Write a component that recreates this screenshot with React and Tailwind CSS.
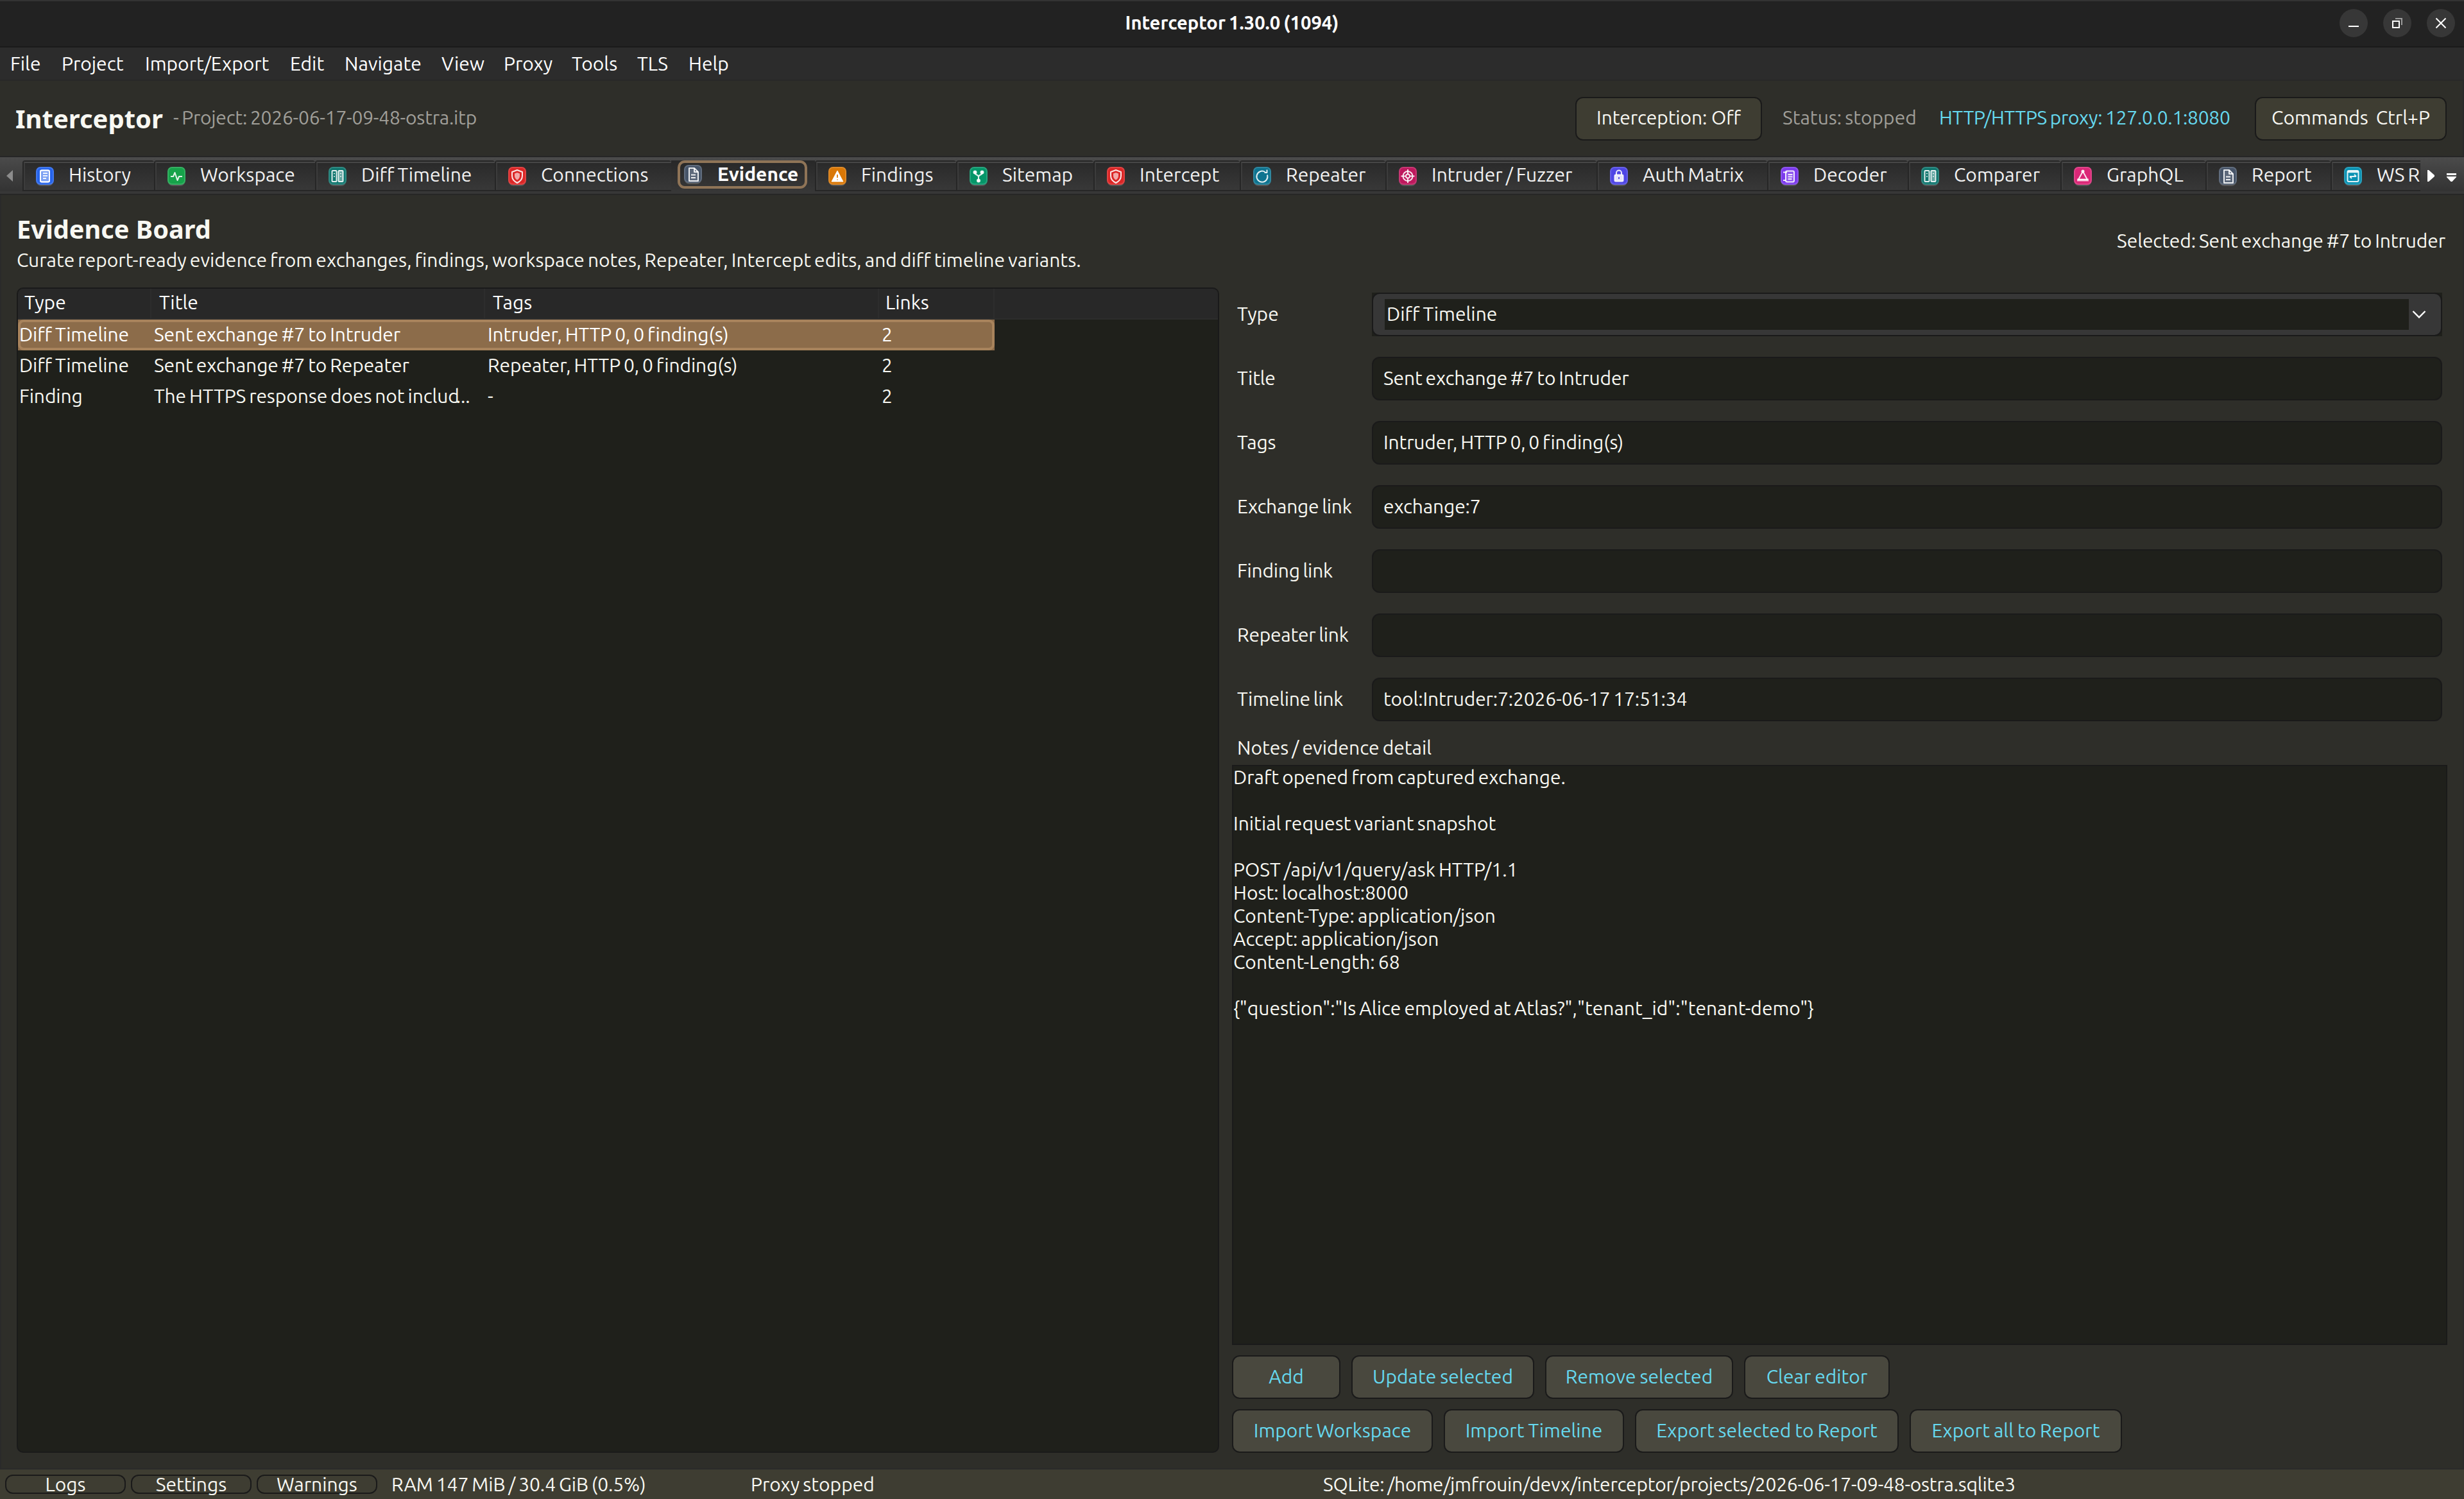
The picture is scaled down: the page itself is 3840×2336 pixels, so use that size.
import React from "react";
import clsx from "clsx";

const MENUS = [
  { label: "File", width: "w-[80px]" },
  { label: "Project", width: "w-[130px]" },
  { label: "Import/Export", width: "w-[226px]" },
  { label: "Edit", width: "w-[85px]" },
  { label: "Navigate", width: "w-[151px]" },
  { label: "View", width: "w-[97px]" },
  { label: "Proxy", width: "w-[106px]" },
  { label: "Tools", width: "w-[102px]" },
  { label: "TLS", width: "w-[80px]" },
  { label: "Help", width: "w-[80px]" },
];

const TABS = [
  { label: "History", icon: "list", color: "#2563eb", width: "w-[205px]" },
  { label: "Workspace", icon: "pulse", color: "#16a34a", width: "w-[251px]" },
  { label: "Diff Timeline", icon: "columns", color: "#0f766e", width: "w-[280px]" },
  { label: "Connections", icon: "shield", color: "#dc2626", width: "w-[275px]" },
  { label: "Evidence", icon: "file", color: "#475569", width: "w-[224px]", active: true },
  { label: "Findings", icon: "warning", color: "#d97706", width: "w-[220px]" },
  { label: "Sitemap", icon: "branch", color: "#059669", width: "w-[214px]" },
  { label: "Intercept", icon: "shield", color: "#dc2626", width: "w-[228px]" },
  { label: "Repeater", icon: "repeat", color: "#0e7490", width: "w-[227px]" },
  { label: "Intruder / Fuzzer", icon: "target", color: "#be185d", width: "w-[329px]" },
  { label: "Auth Matrix", icon: "lock", color: "#4f46e5", width: "w-[266px]" },
  { label: "Decoder", icon: "decode", color: "#7c3aed", width: "w-[219px]" },
  { label: "Comparer", icon: "columns", color: "#0f766e", width: "w-[238px]" },
  { label: "GraphQL", icon: "graph", color: "#db2777", width: "w-[226px]" },
  { label: "Report", icon: "file", color: "#475569", width: "w-[195px]" },
  { label: "WS R", icon: "socket", color: "#0891b2", width: "w-[160px]" },
];

const EVIDENCE = [
  {
    type: "Diff Timeline",
    title: "Sent exchange #7 to Intruder",
    tags: "Intruder, HTTP 0, 0 finding(s)",
    links: 2,
    selected: true,
  },
  {
    type: "Diff Timeline",
    title: "Sent exchange #7 to Repeater",
    tags: "Repeater, HTTP 0, 0 finding(s)",
    links: 2,
  },
  {
    type: "Finding",
    title: "The HTTPS response does not includ",
    clipped: true,
    tags: "-",
    links: 2,
  },
];

const FIELDS = [
  { label: "Title", value: "Sent exchange #7 to Intruder" },
  { label: "Tags", value: "Intruder, HTTP 0, 0 finding(s)" },
  { label: "Exchange link", value: "exchange:7" },
  { label: "Finding link", value: "" },
  { label: "Repeater link", value: "" },
  { label: "Timeline link", value: "tool:Intruder:7:2026-06-17 17:51:34" },
];

const NOTES = `Draft opened from captured exchange.

Initial request variant snapshot

POST /api/v1/query/ask HTTP/1.1
Host: localhost:8000
Content-Type: application/json
Accept: application/json
Content-Length: 68

{"question":"Is Alice employed at Atlas?","tenant_id":"tenant-demo"}`;

const glyphs = {
  list: (
    <>
      <rect x="7" y="5.5" width="14" height="18" rx="2" fill="#fff" fillOpacity=".4" />
      <path d="M11 10h7M11 14h7M11 18h5" />
      <rect x="7" y="5.5" width="14" height="18" rx="2" />
    </>
  ),
  pulse: <path d="M5 15h4l2.5-6 4 12 2.500-6h5" />,
  columns: (
    <>
      <rect x="5.500" y="6" width="7" height="17" rx="1" />
      <rect x="15.500" y="6" width="7" height="17" rx="1" fill="#fff" fillOpacity=".35" />
      <path d="M8 10.500h2M8 15h2M18 10.500h2M18 15h2" strokeWidth="1.600" />
    </>
  ),
  shield: (
    <>
      <path d="M14 5l8 3v6c0 5-3 8.500-8 11-5-2.500-8-6-8-11V8z" />
      <path d="M14 9l4 1.500V14c0 3-1.500 5-4 6.500-2.500-1.500-4-3.500-4-6.500v-3.500z" fill="#fff" fillOpacity=".6" stroke="none" />
    </>
  ),
  file: (
    <>
      <path d="M8 5h8l6 6v14H8z" fill="#fff" fillOpacity=".12" />
      <path d="M16 5v6h6M11 15.500h7M11 20h7" />
    </>
  ),
  warning: (
    <>
      <path d="M14 6l9 17H5z" fill="#fff" stroke="#fff" strokeWidth="1" />
      <path d="M14 12v5M14 19.500v1" stroke="#d97706" strokeWidth="2" />
    </>
  ),
  branch: (
    <>
      <path d="M8.500 9.500c0 4 5.500 2 5.500 6.500v4M19.500 9.500c0 4-5.500 2-5.500 6.500" />
      <circle cx="8.500" cy="8.500" r="2" fill="#fff" />
      <circle cx="19.500" cy="8.500" r="2" fill="#fff" />
      <circle cx="14" cy="21.500" r="2" fill="#fff" />
    </>
  ),
  repeat: <path d="M18.500 8A8.500 8.500 0 1 0 22 12.500M17.500 9h4V4.500" />,
  target: (
    <>
      <circle cx="14" cy="14.500" r="7.500" />
      <circle cx="14" cy="14.500" r="3" />
      <path d="M14 4v7M14 18v7M3.500 14.500h7M17.500 14.500h7" />
    </>
  ),
  lock: (
    <>
      <path d="M10 13V9.500a4 4 0 0 1 8 0V13" />
      <rect x="7.500" y="12.500" width="13" height="10" rx="1.500" fill="#fff" fillOpacity=".85" />
      <path d="M14 16v3" stroke="#4f46e5" />
    </>
  ),
  decode: (
    <>
      <rect x="8" y="6.500" width="13" height="17" rx="2" fill="#fff" fillOpacity=".15" />
      <path d="M4 8.500h6M11.500 12h7M11.500 15.500h7M11.500 19h6M4 21h4" />
    </>
  ),
  graph: (
    <>
      <path d="M14 7l7 13H7z" />
      <circle cx="14" cy="7" r="1.500" fill="#fff" />
      <path d="M5 20.500h18" strokeWidth="4" strokeOpacity=".7" />
    </>
  ),
  socket: (
    <>
      <rect x="5.500" y="6" width="17" height="17" rx="2" />
      <path d="M9 15h10M16 12l3 3M9 15l3 3" />
      <path d="M5.500 8h17" strokeWidth="2.500" />
    </>
  ),
};

function TabIcon({ name, color }) {
  return (
    <svg className="h-[30px] w-[29px] flex-shrink-0" viewBox="0 0 29 30" fill="none">
      <rect x="1" y="2" width="26" height="28" rx="7" fill="#555" />
      <rect x="0" y="0" width="28" height="28" rx="7" fill={color} />
      <rect x="1" y="1" width="26" height="26" rx="6" stroke="#fff" strokeOpacity=".14" strokeWidth="2" />
      <g stroke="#fff" strokeOpacity=".88" strokeWidth="2" strokeLinejoin="round">
        {glyphs[name]}
      </g>
    </svg>
  );
}

function WindowButton({ children }) {
  return (
    <div className="flex size-[44px] items-center justify-center rounded-full bg-[#373737]">
      <svg className="size-[20px]" viewBox="0 0 20 20" fill="none" stroke="#fff" strokeWidth="2">
        {children}
      </svg>
    </div>
  );
}

function TitleBar() {
  return (
    <div className="flex h-[74px] items-center border-t-2 border-b-2 border-t-[#333333] border-b-[#1a1a1a] bg-[#222222] pr-[14px] pb-[2px]">
      <div className="w-[194px]" />
      <p className="flex-grow pb-px text-center text-[29.200px] font-bold text-white">Interceptor 1.30.0 (1094)</p>
      <div className="flex gap-[24px]">
        <WindowButton>
          <path d="M2 15h16" />
        </WindowButton>
        <WindowButton>
          <rect x="3" y="7" width="10" height="10" />
          <path d="M7 3h10v10" strokeOpacity=".5" />
        </WindowButton>
        <WindowButton>
          <path d="M2.500 2.500l15 15M17.500 2.500l-15 15" />
        </WindowButton>
      </div>
    </div>
  );
}

function MenuBar() {
  return (
    <div className="flex h-[52px] items-center border-b-2 border-[#282828] bg-[#2c2c2c] pl-[16px] text-white">
      {MENUS.map((menu) => (
        <span key={menu.label} className={menu.width}>
          {menu.label}
        </span>
      ))}
    </div>
  );
}

function ProjectHeader() {
  return (
    <div className="flex h-[117px] items-center border-r-2 border-[#282828] pr-[25px] pl-[24px]">
      <h1 className="w-[246px] font-['Noto_Sans',sans-serif] text-[40px] font-bold">Interceptor</h1>
      <p className="flex-grow pb-[3px] tracking-[-0.250px] text-[#a09f99]">- Project: 2026-06-17-09-48-ostra.itp</p>
      <button className="h-[68px] w-[291px] rounded-[12px] border-2 border-[#1a1a1a] bg-[#3e3d32] pb-[3px] tracking-[-0.100px]">
        Interception: Off
      </button>
      <p className="ml-[32px] w-[244px] pb-[3px] text-[#a09f99]">Status: stopped</p>
      <p className="w-[492px] pb-[3px] tracking-[-0.300px] text-[#66d9ef]">HTTP/HTTPS proxy: 127.0.0.1:8080</p>
      <button className="h-[68px] w-[299px] rounded-[12px] border-2 border-[#1a1a1a] bg-[#3e3d32] pb-[3px] whitespace-pre [word-spacing:-1px]">
        Commands  Ctrl+P
      </button>
    </div>
  );
}

function Tab({ tab }) {
  if (tab.active) {
    return (
      <div
        className={clsx(
          "flex h-[48px] flex-shrink-0 items-start bg-linear-to-b from-[#282828] to-[#373737] pl-[10px]",
          tab.width
        )}
      >
        <div className="flex h-[44px] w-[202px] items-center rounded-[11px] border-4 border-[#8f7457] pl-[6px]">
          <TabIcon name={tab.icon} color={tab.color} />
          <span className="mt-[-3px] ml-[23px] font-bold text-white">{tab.label}</span>
        </div>
      </div>
    );
  }
  return (
    <div
      className={clsx(
        "flex h-[48px] flex-shrink-0 rounded-t-[4px] border-2 border-r-0 border-[#262626]",
        tab.width
      )}
    >
      <div className="flex w-full items-center border-t-2 border-l-2 border-t-[#474747] border-l-[#3c3c3c] bg-linear-to-b from-[#2a2a2a] to-[#383838] pl-[17px]">
        <TabIcon name={tab.icon} color={tab.color} />
        <span className="mt-[-6px] ml-[22px] whitespace-nowrap text-[#f2f2f2]">{tab.label}</span>
      </div>
    </div>
  );
}

function TabStrip() {
  return (
    <div className="h-[61px] border-t-2 border-b-2 border-[#262626]">
      <div className="flex h-[53px] bg-linear-to-b from-[#4b4b4b] to-[#333333]">
        <div className="flex w-[35px] flex-shrink-0 items-center pt-[4px] pl-[10px]">
          <svg className="h-[18px] w-[10px]" viewBox="0 0 10 18">
            <path d="M10 0v18L0 9z" fill="#8c8c8c" />
          </svg>
        </div>
        <div className="flex w-[3737px] flex-shrink-0 items-end overflow-hidden">
          {TABS.map((tab) => (
            <Tab key={tab.label} tab={tab} />
          ))}
        </div>
        <div className="flex flex-grow items-center gap-[19px] pt-[4px] pl-[11px]">
          <svg className="h-[18px] w-[11px]" viewBox="0 0 11 18">
            <path d="M0 0h2l9 8v2l-9 8H0z" fill="#fff" />
          </svg>
          <svg className="mt-[6px] h-[14px] w-[15px]" viewBox="0 0 15 14">
            <path d="M0 0h15v3H0zM0 5h15v1L8.500 13h-2L0 6z" fill="#fff" />
          </svg>
        </div>
      </div>
      <div className="h-[4px] bg-[#373737]" />
    </div>
  );
}

function EvidenceTable() {
  return (
    <div className="flex h-[1816px] w-[1874px] flex-col overflow-hidden rounded-[10px] border-2 border-[#1a1a1a] bg-[#1f201b]">
      <div className="flex h-[48px] border-b-2 border-[#2d2d2d] bg-[#282828] pb-[4px] leading-[43px] text-white">
        <span className="h-[46px] w-[208px] border-r-2 border-[#2d2d2d] pl-[10px]">Type</span>
        <span className="h-[46px] w-[520px] border-r-2 border-[#2d2d2d] pl-[12px]">Title</span>
        <span className="h-[46px] w-[614px] border-r-2 border-[#2d2d2d] pl-[12px]">Tags</span>
        <span className="h-[46px] w-[180px] border-r-2 border-[#2d2d2d] pl-[10px]">Links</span>
      </div>
      {EVIDENCE.map((row) => (
        <div
          key={row.title}
          className={clsx("h-[48px] w-[1522px]", row.selected && "bg-[#8c6c4a] text-white")}
        >
          <div
            className={clsx(
              "flex h-full border-4 leading-[38px] tracking-[-0.100px]",
              row.selected ? "rounded-[9px] border-[#a8835c]" : "border-transparent"
            )}
          >
            <span className="-ml-[2px] w-[210px]">{row.type}</span>
            <span className="w-[520px] whitespace-nowrap">
              {row.title}
              {row.clipped && <span className="-ml-[5px]">...</span>}
            </span>
            <span className="w-[614px]">{row.tags}</span>
            <span>{row.links}</span>
          </div>
        </div>
      ))}
    </div>
  );
}

function TypeSelect() {
  return (
    <div className="h-[68px] w-[1668px] bg-[#1f201b]">
      <div className="flex h-full items-center rounded-[12px] border-2 border-[#1a1a1a] bg-[#373737] pl-[18px]">
        <div className="flex h-[48px] w-[1596px] items-center bg-[#1f201b] pb-[2px] pl-[3px]">Diff Timeline</div>
        <svg className="ml-[5px] h-[14px] w-[22px]" viewBox="0 0 22 14" fill="none">
          <path d="M1.500 2L11 11.500 20.500 2" stroke="#fff" strokeWidth="2.400" />
        </svg>
      </div>
    </div>
  );
}

function EvidenceEditor() {
  return (
    <div className="flex flex-col">
      <div className="flex flex-col gap-[32px] pt-[8px] pl-[8px]">
        <div className="flex items-center">
          <label className="w-[210px] pb-[2px]">Type</label>
          <TypeSelect />
        </div>
        {FIELDS.map((field) => (
          <div key={field.label} className="flex items-center">
            <label className="w-[210px] pb-[2px] tracking-[-0.250px]">{field.label}</label>
            <div className="flex h-[68px] w-[1668px] items-center rounded-[12px] border-2 border-[#1a1a1a] bg-[#1f201b] pb-[2px] pl-[16px] tracking-[-0.150px]">
              {field.value}
            </div>
          </div>
        ))}
      </div>
      <p className="h-[68px] pt-[23px] pl-[8px]">Notes / evidence detail</p>
      <pre className="h-[904px] w-[1894px] border-2 border-[#1a1a1a] bg-[#1f201b] font-[Ubuntu,'Noto_Sans',sans-serif] leading-[36px]">
        <code className="-mt-px block font-[Ubuntu,'Noto_Sans',sans-serif]">{NOTES}</code>
      </pre>
      <div className="mt-[16px] flex gap-[17px]">
        <ActionButton label="Add" width="w-[169px]" />
        <ActionButton label="Update selected" width="w-[285px]" />
        <ActionButton label="Remove selected" width="w-[293px]" />
        <ActionButton label="Clear editor" width="w-[227px]" />
      </div>
      <div className="mt-[16px] flex gap-[17px]">
        <ActionButton label="Import Workspace" width="w-[313px]" />
        <ActionButton label="Import Timeline" width="w-[281px]" />
        <ActionButton label="Export selected to Report" width="w-[411px]" />
        <ActionButton label="Export all to Report" width="w-[331px]" />
      </div>
    </div>
  );
}

function ActionButton({ label, width }) {
  return (
    <button
      className={clsx(
        "h-[68px] rounded-[12px] border-2 border-[#1a1a1a] bg-[#49483e] pb-[2px] whitespace-nowrap text-[#66d9ef] [word-spacing:-1px]",
        width
      )}
    >
      {label}
    </button>
  );
}

function StatusBar() {
  return (
    <div className="flex h-[48px] items-center border-t-2 border-[#2a2a2a] bg-[#3e3d32] pl-[8px]">
      <div className="flex gap-[8px]">
        {["Logs", "Settings", "Warnings"].map((label) => (
          <button
            key={label}
            className="h-[30px] w-[188px] rounded-[12px] border-2 border-[#1a1a1a] leading-[22px]"
          >
            {label}
          </button>
        ))}
      </div>
      <span className="ml-[22px] w-[560px] tracking-[-0.100px]">RAM 147 MiB / 30.4 GiB (0.5%)</span>
      <span className="w-[892px]">Proxy stopped</span>
      <span className="tracking-[-0.260px]">
        SQLite: /home/jmfrouin/devx/interceptor/projects/2026-06-17-09-48-ostra.sqlite3
      </span>
    </div>
  );
}

function App() {
  return (
    <div className="flex h-[2336px] w-[3840px] flex-col overflow-hidden bg-[#2e2e29] font-[Ubuntu,'Noto_Sans',sans-serif] text-[30px] leading-[36px] text-[#f8f8f2] [word-spacing:-1.8px]">
      <TitleBar />
      <MenuBar />
      <ProjectHeader />
      <TabStrip />
      <main className="flex flex-grow flex-col border-x-2 border-[#2a2a2a] pr-[24px] pl-[24px]">
        <div className="flex h-[144px] items-center justify-between">
          <div className="pt-[4px]">
            <h2 className="font-['Noto_Sans',sans-serif] text-[39.700px] leading-[48px] font-bold [word-spacing:0px]">
              Evidence Board
            </h2>
            <p className="mt-[6px]">
              Curate report-ready evidence from exchanges, findings, workspace notes, Repeater, Intercept edits, and
              diff timeline variants.
            </p>
          </div>
          <p className="pr-[3px] pb-[3px] tracking-[-0.100px]">Selected: Sent exchange #7 to Intruder</p>
        </div>
        <div className="flex gap-[20px]">
          <EvidenceTable />
          <EvidenceEditor />
        </div>
      </main>
      <StatusBar />
    </div>
  );
}

export default App;
